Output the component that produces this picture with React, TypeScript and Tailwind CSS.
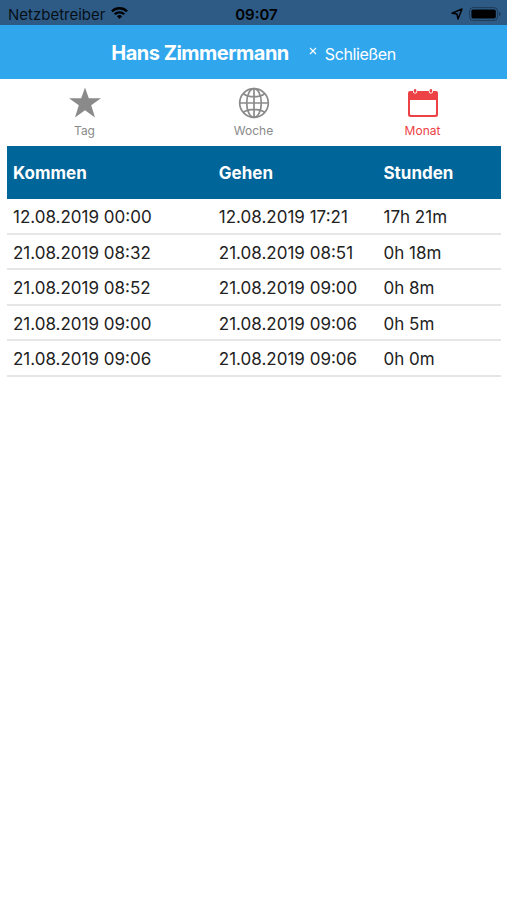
import React from "react";

type Entry = {
  start: string;
  end: string;
  hours: string;
};

const entries: Entry[] = [
  { start: "12.08.2019 00:00", end: "12.08.2019 17:21", hours: "17h 21m" },
  { start: "21.08.2019 08:32", end: "21.08.2019 08:51", hours: "0h 18m" },
  { start: "21.08.2019 08:52", end: "21.08.2019 09:00", hours: "0h 8m" },
  { start: "21.08.2019 09:00", end: "21.08.2019 09:06", hours: "0h 5m" },
  { start: "21.08.2019 09:06", end: "21.08.2019 09:06", hours: "0h 0m" },
];

const StarIcon: React.FC = () => (
  <svg viewBox="0 0 32 32" className="w-8 h-8" fill="currentColor" aria-hidden="true">
    <path d="M16 0.5 19.8 11.3H32L22.2 18.2 26 30.5 16 23.2 6 30.5 9.8 18.2 0 11.3H12.2Z" />
  </svg>
);

const GlobeIcon: React.FC = () => (
  <svg viewBox="0 0 32 32" className="w-8 h-8" fill="none" stroke="currentColor" strokeWidth="1.7" aria-hidden="true">
    <circle cx="16" cy="16" r="14.3" />
    <ellipse cx="16" cy="16" rx="7.3" ry="14.3" />
    <path d="M16 1.7V30.3M1.7 16H30.3M5.4 6.7C11 10.7 21 10.7 26.6 6.7M5.4 25.3C11 21.3 21 21.3 26.6 25.3" />
  </svg>
);

const CalendarIcon: React.FC = () => (
  <svg viewBox="0 0 32 32" className="w-8 h-8" fill="currentColor" aria-hidden="true">
    <path
      fillRule="evenodd"
      d="M3 4H6V4.6A2.1 2.1 0 0 0 10.2 4.6V4H21.8V4.6A2.1 2.1 0 0 0 26 4.6V4H29A2 2 0 0 1 31 6V27.5A2.5 2.5 0 0 1 28.5 30H3.5A2.5 2.5 0 0 1 1 27.5V6A2 2 0 0 1 3 4ZM3 13V26.8A1.2 1.2 0 0 0 4.2 28H27.8A1.2 1.2 0 0 0 29 26.8V13Z"
    />
    <rect x="6.9" y="2" width="2.4" height="3.8" rx="1.2" />
    <rect x="22.7" y="2" width="2.4" height="3.8" rx="1.2" />
  </svg>
);

const tabs = [
  { label: "Tag", icon: <StarIcon />, active: false },
  { label: "Woche", icon: <GlobeIcon />, active: false },
  { label: "Monat", icon: <CalendarIcon />, active: true },
];

const StatusBar: React.FC = () => (
  <div className="h-[25px] px-2 grid grid-cols-3 items-center bg-[#2d5b86] text-black text-[15px] leading-5">
    <div className="flex items-center gap-1.5 pt-1">
      <span className="text-black/85">Netzbetreiber</span>
      <svg viewBox="0 0 17 12" className="w-[17px] h-3 mb-1" fill="none" stroke="currentColor" strokeWidth="2.3" aria-hidden="true">
        <path d="M0.9 4.4A10.8 10.8 0 0 1 16.1 4.4M3.7 7.3A6.8 6.8 0 0 1 13.3 7.3" />
        <path d="M8.5 12 5.9 9.3A3.8 3.8 0 0 1 11.1 9.3Z" fill="currentColor" stroke="none" />
      </svg>
    </div>
    <div className="pt-1 pl-1.5 text-center font-semibold">09:07</div>
    <div className="flex items-center justify-end gap-1.5 pt-0.5 -mr-2 pr-1.5">
      <svg viewBox="0 0 12 12" className="w-3 h-3" fill="none" stroke="currentColor" strokeWidth="1.5" strokeLinejoin="round" aria-hidden="true">
        <path d="M11 1 7 11 6 6 1 5.2Z" />
      </svg>
      <svg viewBox="0 0 32 14" className="w-8 h-3.5" aria-hidden="true">
        <rect x="0.6" y="0.6" width="28" height="12.8" rx="3.6" fill="none" stroke="#000" strokeOpacity="0.35" />
        <rect x="2.4" y="2.4" width="24.4" height="9.2" rx="1.8" />
        <path d="M30 4.8A2.4 2.4 0 0 1 30 9.2Z" fillOpacity="0.4" />
      </svg>
    </div>
  </div>
);

const App: React.FC = () => {
  return (
    <div className="min-h-screen bg-white font-['Inter',sans-serif]">
      <StatusBar />

      <header className="h-[54px] pt-0.5 flex items-center justify-center bg-[#30a7ed] text-white">
        <h1 className="text-xl font-bold tracking-tight">Hans Zimmermann</h1>
        <button type="button" className="ml-5 pt-0.5 flex items-center gap-2 text-base tracking-tight">
          <svg viewBox="0 0 8 8" className="w-2 h-2 mb-1.5" stroke="currentColor" strokeWidth="1.1" aria-hidden="true">
            <path d="M1 1 7 7M7 1 1 7" />
          </svg>
          Schließen
        </button>
      </header>

      <nav className="h-[67px] grid grid-cols-3">
        {tabs.map((tab) => (
          <button
            key={tab.label}
            type="button"
            className={
              tab.active
                ? "flex flex-col items-center pt-2 text-[#ed4245]"
                : "flex flex-col items-center pt-2 text-[#8a8a8a]"
            }
          >
            {tab.icon}
            <span className="mt-1 text-xs leading-4">{tab.label}</span>
          </button>
        ))}
      </nav>

      <main className="pl-[7px] pr-1.5">
        <table className="w-full table-fixed border-collapse text-left text-[17px] leading-6 text-[#222]">
          <thead>
            <tr className="h-[53px] bg-[#006599] text-white">
              <th className="w-5/12 px-1.5 font-bold">Kommen</th>
              <th className="w-4/12 px-1.5 font-bold">Gehen</th>
              <th className="w-3/12 px-1.5 font-bold">Stunden</th>
            </tr>
          </thead>
          <tbody>
            {entries.map((entry) => (
              <tr key={entry.start} className="odd:h-9 even:h-[35px] shadow-[inset_0_-2px_0_#e6e6e6]">
                <td className="px-1.5">{entry.start}</td>
                <td className="px-1.5">{entry.end}</td>
                <td className="px-1.5">{entry.hours}</td>
              </tr>
            ))}
          </tbody>
        </table>
      </main>
    </div>
  );
};

export default App;
